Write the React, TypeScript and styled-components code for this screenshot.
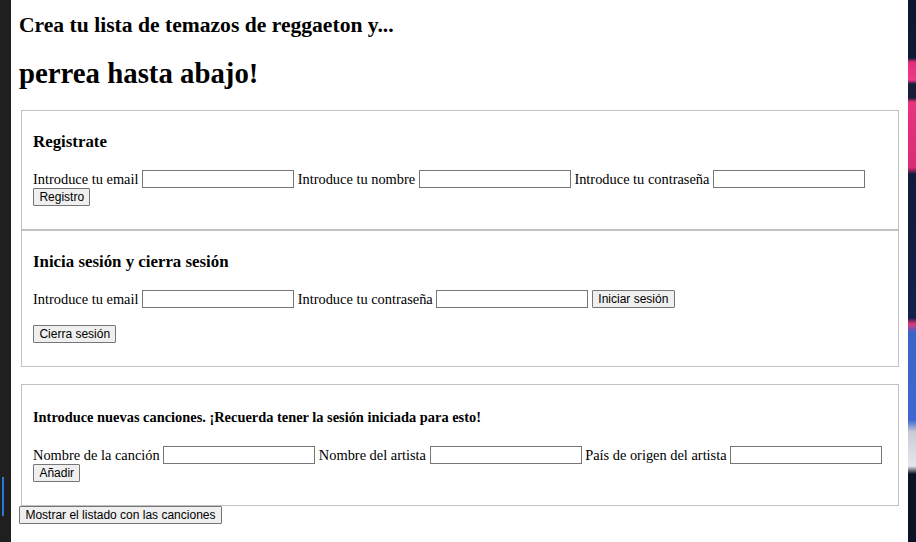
import React from "react";
import styled, { createGlobalStyle } from "styled-components";

const Global = createGlobalStyle`
  html, body { margin: 0; padding: 0; }
  body { background: #ffffff; }
`;

const Desktop = styled.div`
  display: flex;
  width: 916px;
  height: 542px;
  overflow: hidden;
`;

const LeftStrip = styled.div`
  width: 11px;
  flex: none;
  background:
    linear-gradient(to bottom, transparent 477px, #2b78d4 477px, #2b78d4 516px, transparent 516px) 2px 0 / 2px 100% no-repeat,
    #1f1f1f;
`;

const RightStrip = styled.div`
  width: 8px;
  flex: none;
  background: linear-gradient(
    to bottom,
    #0d1630 0px,
    #101a36 58px,
    #e2307c 62px,
    #ef3a86 80px,
    #1a1d3a 84px,
    #1a1d3a 98px,
    #e8347f 102px,
    #d92c74 168px,
    #121a3a 174px,
    #14204a 318px,
    #e2387c 324px,
    #3c63c8 332px,
    #3f67d0 420px,
    #c9ccd6 432px,
    #e6e7ea 466px,
    #0b1226 474px,
    #0b1226 542px
  );
`;

const Main = styled.main`
  flex: 1;
  background: #ffffff;
  padding: 0 7px 0 8px;
  font-family: "Liberation Serif", "Times New Roman", serif;
  font-size: 14.4px;
  color: #000000;
`;

const Lead = styled.h2`
  margin: 13px 0 0;
  font-size: 21.6px;
  line-height: 25px;
  font-weight: bold;
`;

const Title = styled.h1`
  margin: 19px 0 21px;
  font-size: 28.8px;
  line-height: 32px;
  font-weight: bold;
`;

const Section = styled.fieldset<{ $gap?: number }>`
  margin: ${(p) => p.$gap ?? 0}px 2px 0;
  border: 1px solid #c0c0c0;
  padding: 0 11px 23px;
  min-width: 0;
`;

const SectionTitle = styled.h3`
  margin: 21px 0 19px;
  font-size: 16.85px;
  line-height: 19px;
  font-weight: bold;
`;

const Notice = styled.h4`
  margin: 24px 0 21px;
  font-size: 14.4px;
  line-height: 16px;
  font-weight: bold;
`;

const FieldRow = styled.div`
  display: flex;
  align-items: center;
  gap: 3.6px;
  height: 18px;
  white-space: nowrap;
`;

const Label = styled.span`
  line-height: normal;
`;

const TextInput = styled.input`
  box-sizing: border-box;
  width: 152px;
  height: 18px;
  margin: 0;
  padding: 1px 2px;
  border: 1px solid #767676;
  border-radius: 0;
  background: #ffffff;
  font-family: "Liberation Sans", Arial, sans-serif;
  font-size: 12px;
`;

const ActionRow = styled.div<{ $gap?: number }>`
  display: flex;
  height: 18px;
  margin-top: ${(p) => p.$gap ?? 0}px;
`;

const Button = styled.button`
  box-sizing: border-box;
  height: 18px;
  margin: 0;
  padding: 1px 5.4px;
  border: 1px solid #767676;
  border-radius: 1px;
  background: #efefef;
  color: #000000;
  font-family: "Liberation Sans", Arial, sans-serif;
  font-size: 12px;
  line-height: normal;
  white-space: nowrap;
`;

type Field = { label: string; type?: string };

const Fields: React.FC<{ fields: Field[]; children?: React.ReactNode }> = ({ fields, children }) => (
  <FieldRow>
    {fields.map((f) => (
      <React.Fragment key={f.label}>
        <Label>{f.label}</Label>
        <TextInput type={f.type ?? "text"} />
      </React.Fragment>
    ))}
    {children}
  </FieldRow>
);

export default function App() {
  return (
    <>
      <Global />
      <Desktop>
        <LeftStrip />
        <Main>
          <Lead>Crea tu lista de temazos de reggaeton y...</Lead>
          <Title>perrea hasta abajo!</Title>

          <Section>
            <SectionTitle>Registrate</SectionTitle>
            <Fields
              fields={[
                { label: "Introduce tu email", type: "email" },
                { label: "Introduce tu nombre" },
                { label: "Introduce tu contraseña", type: "password" },
              ]}
            />
            <ActionRow>
              <Button>Registro</Button>
            </ActionRow>
          </Section>

          <Section>
            <SectionTitle>Inicia sesión y cierra sesión</SectionTitle>
            <Fields
              fields={[
                { label: "Introduce tu email", type: "email" },
                { label: "Introduce tu contraseña", type: "password" },
              ]}
            >
              <Button>Iniciar sesión</Button>
            </Fields>
            <ActionRow $gap={17}>
              <Button>Cierra sesión</Button>
            </ActionRow>
          </Section>

          <Section $gap={17}>
            <Notice>Introduce nuevas canciones. ¡Recuerda tener la sesión iniciada para esto!</Notice>
            <Fields
              fields={[
                { label: "Nombre de la canción" },
                { label: "Nombre del artista" },
                { label: "País de origen del artista" },
              ]}
            />
            <ActionRow>
              <Button>Añadir</Button>
            </ActionRow>
          </Section>

          <ActionRow>
            <Button>Mostrar el listado con las canciones</Button>
          </ActionRow>
        </Main>
        <RightStrip />
      </Desktop>
    </>
  );
}
